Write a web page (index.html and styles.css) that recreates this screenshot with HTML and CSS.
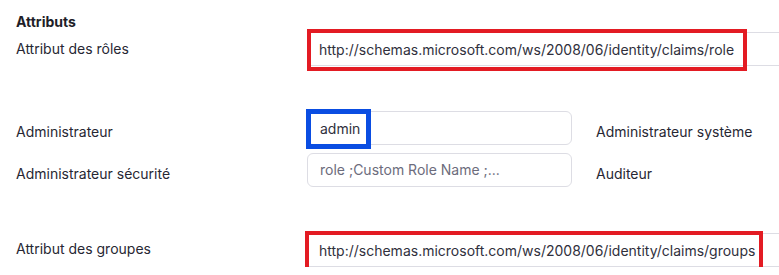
FILE: index.html
```html
<!DOCTYPE html>
<html lang="fr">
  <head>
    <meta charset="UTF-8" />
    <meta name="viewport" content="width=device-width, initial-scale=1.0" />
    <title>Attributs</title>
    <link rel="stylesheet" href="styles.css">
  </head>
  <body>
    <div class="panel">
      <h3>Attributs</h3>

      <div class="attr-row">
        <label>Attribut des rôles</label>
        <div class="field wide">
          <span class="mark red">http://schemas.microsoft.com/ws/2008/06/identity/claims/role</span>
        </div>
      </div>

      <div class="role-map">
        <label>Administrateur</label>
        <div class="cell">
          <div class="field">
            <span class="mark blue">admin</span>
          </div>
        </div>
        <label class="side">Administrateur système</label>

        <label>Administrateur sécurité</label>
        <div class="cell">
          <div class="field">
            <span class="placeholder">role ;Custom Role Name ;...</span>
          </div>
        </div>
        <label class="side">Auditeur</label>
      </div>

      <div class="attr-row groups">
        <label>Attribut des groupes</label>
        <div class="field wide">
          <span class="mark red">http://schemas.microsoft.com/ws/2008/06/identity/claims/groups</span>
        </div>
      </div>
    </div>
  </body>
</html>
```

FILE: styles.css
```css
:root {
  --text-color: #272733;
  --muted-color: #6c6c7c;
  --border-color: #dddde4;
  --red: #e31b23;
  --blue: #0a4de2;
}

body {
  margin: 0;
  font-family: "Inter", "Liberation Sans", sans-serif;
  font-size: 14px;
  line-height: 20px;
  color: var(--text-color);
  background: #ffffff;
  overflow: hidden;
}

.panel {
  padding: 12px 0 0 16px;
  overflow: hidden;
}

h3 {
  margin: 0;
  font-size: 14px;
  line-height: 20px;
  font-weight: 700;
  color: #1e1e28;
}

/* label + long input */
.attr-row {
  display: grid;
  grid-template-columns: 291px 1fr;
  align-items: center;
}

.attr-row.groups {
  margin-top: 38px;
}

.attr-row.groups label {
  margin-top: -2px;
}

/* role mapping grid */
.role-map {
  display: grid;
  grid-template-columns: 291px 265px auto;
  align-items: center;
  margin-top: 45px;
}

.role-map .side {
  padding-left: 24px;
}

.cell {
  padding-bottom: 8px;
}

.field {
  box-sizing: border-box;
  height: 34px;
  display: flex;
  align-items: center;
  padding: 0 12px;
  border: 1px solid var(--border-color);
  border-radius: 6px;
  color: #30303c;
  white-space: nowrap;
}

.field.wide {
  margin-right: -40px;
  border-radius: 0;
  border-left: none;
  padding-left: 12px;
}

.placeholder {
  color: var(--muted-color);
}

/* annotation boxes */
.mark {
  box-sizing: border-box;
  display: inline-flex;
  align-items: center;
  height: 42px;
  margin-top: 1px;
  padding: 0 9px 0 8px;
  border: 4px solid var(--red);
}

.mark.red {
  margin-left: -12px;
}

.mark.blue {
  height: 40px;
  margin-left: -14px;
  padding: 0 6px 0 9px;
  border: 5px solid var(--blue);
}

.groups .mark {
  margin-left: -14px;
  padding: 0 4px 0 10px;
  height: 41px;
  margin-top: 2px;
}
```
